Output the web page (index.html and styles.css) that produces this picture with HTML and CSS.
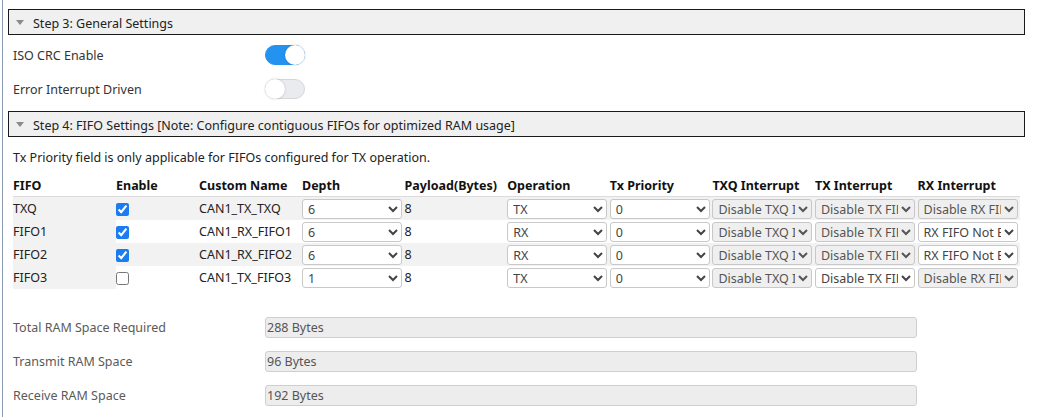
FILE: index.html
```html
<!DOCTYPE html>
<html>
<head>
<meta charset="utf-8">
<link rel="stylesheet" href="styles.css">
</head>
<body>
<div class="page">
  <div class="section-head"><span class="tri"></span>Step 3: General Settings</div>
  <div class="settings">
    <div class="setting-row">
      <span class="setting-label">ISO CRC Enable</span>
      <span class="toggle on"><span class="knob"></span></span>
    </div>
    <div class="setting-row">
      <span class="setting-label">Error Interrupt Driven</span>
      <span class="toggle"><span class="knob"></span></span>
    </div>
  </div>
  <div class="section-head"><span class="tri"></span>Step 4: FIFO Settings [Note: Configure contiguous FIFOs for optimized RAM usage]</div>
  <div class="fifo">
    <p class="note">Tx Priority field is only applicable for FIFOs configured for TX operation.</p>
    <table class="fifo-table">
      <colgroup>
        <col class="c-fifo"><col class="c-en"><col class="c-name"><col class="c-std"><col class="c-std"><col class="c-std"><col class="c-std"><col class="c-std"><col class="c-std"><col class="c-std">
      </colgroup>
      <thead>
        <tr><th>FIFO</th><th>Enable</th><th>Custom Name</th><th>Depth</th><th>Payload(Bytes)</th><th>Operation</th><th>Tx Priority</th><th>TXQ Interrupt</th><th>TX Interrupt</th><th>RX Interrupt</th></tr>
      </thead>
      <tbody>
        <tr class="odd">
          <td class="first">TXQ</td>
          <td><input type="checkbox" checked></td>
          <td>CAN1_TX_TXQ</td>
          <td><select><option>6</option></select></td>
          <td>8</td>
          <td><select><option>TX</option></select></td>
          <td><select><option>0</option></select></td>
          <td><select disabled><option>Disable TXQ Interrupt</option></select></td>
          <td><select disabled><option>Disable TX FIFO Interrupt</option></select></td>
          <td><select disabled><option>Disable RX FIFO Interrupt</option></select></td>
        </tr>
        <tr>
          <td class="first">FIFO1</td>
          <td><input type="checkbox" checked></td>
          <td>CAN1_RX_FIFO1</td>
          <td><select><option>6</option></select></td>
          <td>8</td>
          <td><select><option>RX</option></select></td>
          <td><select><option>0</option></select></td>
          <td><select disabled><option>Disable TXQ Interrupt</option></select></td>
          <td><select disabled><option>Disable TX FIFO Interrupt</option></select></td>
          <td><select><option>RX FIFO Not Empty</option></select></td>
        </tr>
        <tr class="odd">
          <td class="first">FIFO2</td>
          <td><input type="checkbox" checked></td>
          <td>CAN1_RX_FIFO2</td>
          <td><select><option>6</option></select></td>
          <td>8</td>
          <td><select><option>RX</option></select></td>
          <td><select><option>0</option></select></td>
          <td><select disabled><option>Disable TXQ Interrupt</option></select></td>
          <td><select disabled><option>Disable TX FIFO Interrupt</option></select></td>
          <td><select><option>RX FIFO Not Empty</option></select></td>
        </tr>
        <tr>
          <td class="first">FIFO3</td>
          <td><input type="checkbox"></td>
          <td>CAN1_TX_FIFO3</td>
          <td><select><option>1</option></select></td>
          <td>8</td>
          <td><select><option>TX</option></select></td>
          <td><select><option>0</option></select></td>
          <td><select disabled><option>Disable TXQ Interrupt</option></select></td>
          <td><select><option>Disable TX FIFO Interrupt</option></select></td>
          <td><select disabled><option>Disable RX FIFO Interrupt</option></select></td>
        </tr>
      </tbody>
    </table>
    <div class="ram">
      <div class="ram-row"><span class="ram-label">Total RAM Space Required</span><input class="ram-input" type="text" value="288 Bytes" readonly></div>
      <div class="ram-row"><span class="ram-label">Transmit RAM Space</span><input class="ram-input" type="text" value="96 Bytes" readonly></div>
      <div class="ram-row"><span class="ram-label">Receive RAM Space</span><input class="ram-input" type="text" value="192 Bytes" readonly></div>
    </div>
  </div>
</div>
</body>
</html>
```
FILE: styles.css
```css
html, body {
  margin: 0;
  padding: 0;
  background: #fff;
}
body {
  font-family: "Noto Sans", "Open Sans", sans-serif;
  font-size: 12.5px;
  color: #222;
  height: 417px;
  overflow: hidden;
}
.page {
  margin-left: 2px;
  border-left: 1px solid #8d9db3;
  padding: 9px 12px 0 5px;
  height: 417px;
  box-sizing: border-box;
}
.section-head {
  height: 26px;
  box-sizing: border-box;
  border: 1px solid #1a1a1a;
  background: #f0f0f0;
  display: flex;
  align-items: center;
  padding-left: 7px;
  padding-top: 3px;
  font-size: 12.5px;
  color: #222;
}
.tri {
  width: 0;
  height: 0;
  border-left: 4.5px solid transparent;
  border-right: 4.5px solid transparent;
  border-top: 5px solid #8a8a8a;
  margin-right: 9px;
  margin-top: -2px;
}
.settings {
  padding: 10px 0 12px 5px;
  display: flex;
  flex-direction: column;
  gap: 14px;
}
.setting-row {
  display: flex;
  align-items: center;
  height: 20px;
}
.setting-label {
  width: 252px;
  color: #333;
}
.toggle {
  width: 40px;
  height: 20px;
  border-radius: 10px;
  background: #e9ebee;
  box-sizing: border-box;
  border: 1px solid #d4d6d9;
  display: flex;
  align-items: center;
}
.toggle .knob {
  width: 20px;
  height: 20px;
  border-radius: 50%;
  background: #fff;
  box-shadow: 0 0 2px rgba(0,0,0,0.25);
  margin-left: -1px;
}
.toggle.on {
  background: #2492ef;
  border-color: #2492ef;
  justify-content: flex-end;
}
.toggle.on .knob {
  margin-left: 0;
  margin-right: -1px;
}
.fifo {
  padding-left: 5px;
}
.note {
  margin: 12px 0 10px 0;
  color: #222;
  line-height: 17px;
}
.fifo-table {
  border-collapse: collapse;
  table-layout: fixed;
  width: 1007px;
}
.c-fifo { width: 103px; }
.c-en { width: 83px; }
.c-name { width: 103px; }
.c-std { width: 102.6px; }
.fifo-table th {
  text-align: left;
  font-weight: bold;
  padding: 0 0 2px 0;
  height: 18px;
  line-height: 17px;
  color: #111;
  border-bottom: 1px solid #dcdcdc;
}
.fifo-table td {
  padding: 0;
  height: 23px;
  line-height: 20px;
  vertical-align: middle;
  color: #222;
}
.fifo-table tr.odd td {
  background: #f2f2f2;
}
.fifo-table td.first {
  background: #f2f2f2;
}
.fifo-table input[type="checkbox"] {
  margin: 0;
  width: 13px;
  height: 13px;
  accent-color: #1a7cf0;
  vertical-align: middle;
}
.fifo-table select {
  width: 100px;
  height: 20px;
  font-family: "Noto Sans", "Open Sans", sans-serif;
  font-size: 12.5px;
  color: #444;
  background: #fff;
  border: 1px solid #c8c8c8;
  border-radius: 3px;
  padding: 0 0 0 1px;
  margin: 0;
  vertical-align: middle;
}
.fifo-table select:disabled {
  background: #efefef;
  color: #555;
  opacity: 1;
}
.ram {
  margin-top: 28px;
  display: flex;
  flex-direction: column;
  gap: 13px;
}
.ram-row {
  display: flex;
  align-items: center;
  height: 21px;
}
.ram-label {
  width: 252px;
  color: #5a5a5a;
}
.ram-input {
  width: 652px;
  height: 21px;
  box-sizing: border-box;
  border: 1px solid #cfcfcf;
  border-radius: 3px;
  background: #ededed;
  font-family: "Noto Sans", "Open Sans", sans-serif;
  font-size: 12.5px;
  color: #555;
  padding: 0 1px;
  margin: 0;
}
```
